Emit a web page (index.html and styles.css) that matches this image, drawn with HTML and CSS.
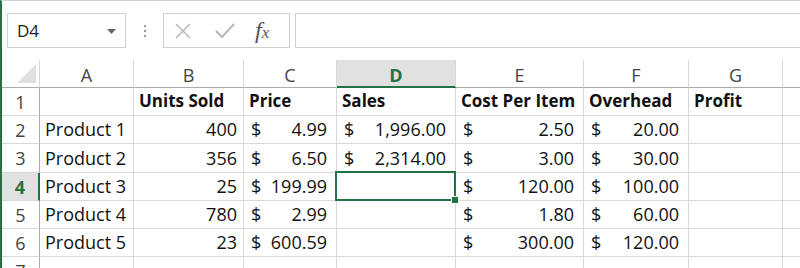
FILE: index.html
```html
<!DOCTYPE html>
<html>
<head>
<meta charset="utf-8">
<link rel="stylesheet" href="styles.css">
</head>
<body>
<div class="app">
  <div class="toolbar">
    <div class="namebox">
      <span class="ref">D4</span>
      <svg class="caret" width="9" height="5" viewBox="0 0 9 5"><path d="M0 0H9L4.5 5Z" fill="#666"/></svg>
    </div>
    <div class="grip"><i></i><i></i><i></i></div>
    <div class="fbtns">
      <svg class="ico" width="18" height="18" viewBox="0 0 18 18"><path d="M2 2L16 16M16 2L2 16" stroke="#b8b8b8" stroke-width="1.6" fill="none"/></svg>
      <svg class="ico" width="22" height="18" viewBox="0 0 22 18"><path d="M2 9L8 15L20 2" stroke="#b8b8b8" stroke-width="2" fill="none"/></svg>
      <span class="fx">f<small>x</small></span>
    </div>
    <div class="fbar"></div>
  </div>
  <div class="sheet">
    <div class="corner"><svg width="19" height="19" viewBox="0 0 19 19"><path d="M19 0V19H0Z" fill="#dfdfdf"/></svg></div>
    <div class="ch">A</div>
    <div class="ch">B</div>
    <div class="ch">C</div>
    <div class="ch sel">D</div>
    <div class="ch">E</div>
    <div class="ch">F</div>
    <div class="ch">G</div>
    <div class="ch"></div>

    <div class="rh">1</div>
    <div class="c"></div>
    <div class="c b">Units Sold</div>
    <div class="c b">Price</div>
    <div class="c b">Sales</div>
    <div class="c b">Cost Per Item</div>
    <div class="c b">Overhead</div>
    <div class="c b">Profit</div>
    <div class="c"></div>

    <div class="rh">2</div>
    <div class="c">Product 1</div>
    <div class="c num">400</div>
    <div class="c acc"><span>$</span><span>4.99</span></div>
    <div class="c acc"><span>$</span><span>1,996.00</span></div>
    <div class="c acc"><span>$</span><span>2.50</span></div>
    <div class="c acc"><span>$</span><span>20.00</span></div>
    <div class="c"></div>
    <div class="c"></div>

    <div class="rh">3</div>
    <div class="c">Product 2</div>
    <div class="c num">356</div>
    <div class="c acc"><span>$</span><span>6.50</span></div>
    <div class="c acc"><span>$</span><span>2,314.00</span></div>
    <div class="c acc"><span>$</span><span>3.00</span></div>
    <div class="c acc"><span>$</span><span>30.00</span></div>
    <div class="c"></div>
    <div class="c"></div>

    <div class="rh sel">4</div>
    <div class="c">Product 3</div>
    <div class="c num">25</div>
    <div class="c acc"><span>$</span><span>199.99</span></div>
    <div class="c active"></div>
    <div class="c acc"><span>$</span><span>120.00</span></div>
    <div class="c acc"><span>$</span><span>100.00</span></div>
    <div class="c"></div>
    <div class="c"></div>

    <div class="rh">5</div>
    <div class="c">Product 4</div>
    <div class="c num">780</div>
    <div class="c acc"><span>$</span><span>2.99</span></div>
    <div class="c"></div>
    <div class="c acc"><span>$</span><span>1.80</span></div>
    <div class="c acc"><span>$</span><span>60.00</span></div>
    <div class="c"></div>
    <div class="c"></div>

    <div class="rh">6</div>
    <div class="c">Product 5</div>
    <div class="c num">23</div>
    <div class="c acc"><span>$</span><span>600.59</span></div>
    <div class="c"></div>
    <div class="c acc"><span>$</span><span>300.00</span></div>
    <div class="c acc"><span>$</span><span>120.00</span></div>
    <div class="c"></div>
    <div class="c"></div>

    <div class="rh">7</div>
    <div class="c"></div>
    <div class="c"></div>
    <div class="c"></div>
    <div class="c"></div>
    <div class="c"></div>
    <div class="c"></div>
    <div class="c"></div>
    <div class="c"></div>
  </div>
</div>
</body>
</html>
```
FILE: styles.css
```css
* { box-sizing: border-box; }
html, body { margin: 0; padding: 0; background: #fff; }
body {
  width: 800px;
  height: 268px;
  overflow: hidden;
  font-family: "Open Sans", "Liberation Sans", sans-serif;
  color: #111;
}
.app {
  height: 268px;
  border-left: 2px solid #217346;
  border-top: 1px solid #d2d2d2;
  overflow: hidden;
}
.toolbar {
  height: 59px;
  display: flex;
  align-items: flex-start;
  padding: 12px 0 0 5px;
}
.namebox {
  width: 119px;
  height: 35px;
  border: 1px solid #cfcfcf;
  display: flex;
  align-items: center;
  justify-content: space-between;
  padding: 0 9px 0 9px;
}
.namebox .ref { font-size: 17px; color: #222; }
.caret { margin-top: 1px; }
.grip {
  width: 37px;
  height: 35px;
  display: flex;
  flex-direction: column;
  align-items: center;
  justify-content: center;
  gap: 3px;
}
.grip i { width: 2px; height: 2px; background: #9a9a9a; display: block; }
.fbtns {
  width: 127px;
  height: 35px;
  border: 1px solid #cfcfcf;
  display: flex;
  align-items: center;
  padding-left: 10px;
  gap: 22px;
}
.fx {
  font-family: "Liberation Serif", "DejaVu Serif", serif;
  font-style: italic;
  font-size: 24px;
  color: #555;
  margin-left: -3px;
  line-height: 1;
  margin-top: -2px;
}
.fx small { font-size: 17px; }
.fbar {
  flex: 1;
  height: 35px;
  margin-left: 5px;
  margin-right: -4px;
  border: 1px solid #cfcfcf;
}
.sheet {
  display: grid;
  grid-template-columns: 38px 94px 110px 93px 119px 128px 105px 94px 40px;
  grid-template-rows: 28px repeat(7, 28.2px);
}
.corner {
  border-right: 1px solid #d8d8d8;
  border-bottom: 1px solid #ababab;
  display: flex;
  align-items: flex-end;
  justify-content: flex-end;
  padding: 0 3px 4px 0;
}
.ch {
  border-right: 1px solid #d8d8d8;
  border-bottom: 1px solid #ababab;
  display: flex;
  align-items: center;
  justify-content: center;
  font-size: 18px;
  color: #444;
  padding-top: 2px;
}
.ch.sel {
  background: #e1e1e1;
  border-bottom: 2px solid #217346;
  color: #217346;
  font-weight: 700;
  padding-top: 3px;
}
.rh {
  border-right: 1px solid #ababab;
  border-bottom: 1px solid #d8d8d8;
  display: flex;
  align-items: center;
  justify-content: center;
  font-size: 18px;
  color: #444;
  padding-top: 1px;
}
.rh.sel {
  background: #e1e1e1;
  border-right: 2px solid #217346;
  color: #217346;
  font-weight: 700;
}
.c {
  border-right: 1px solid #d8d8d8;
  border-bottom: 1px solid #d8d8d8;
  display: flex;
  align-items: flex-end;
  padding: 0 5px 2px 5px;
  font-size: 18px;
  line-height: 24px;
  white-space: nowrap;
  color: #111;
}
.c.b { font-weight: 700; font-size: 17px; }
.c.num { justify-content: flex-end; padding-right: 6px; }
.c.acc { justify-content: space-between; padding: 0 9px 2px 7px; }
.c.active { position: relative; }
.c.active::before {
  content: "";
  position: absolute;
  left: -2px;
  top: -2px;
  right: -1px;
  bottom: -1px;
  border: 2px solid #217346;
}
.c.active::after {
  content: "";
  position: absolute;
  right: -4px;
  bottom: -4px;
  width: 6px;
  height: 6px;
  background: #217346;
  border: 1px solid #fff;
}
```
